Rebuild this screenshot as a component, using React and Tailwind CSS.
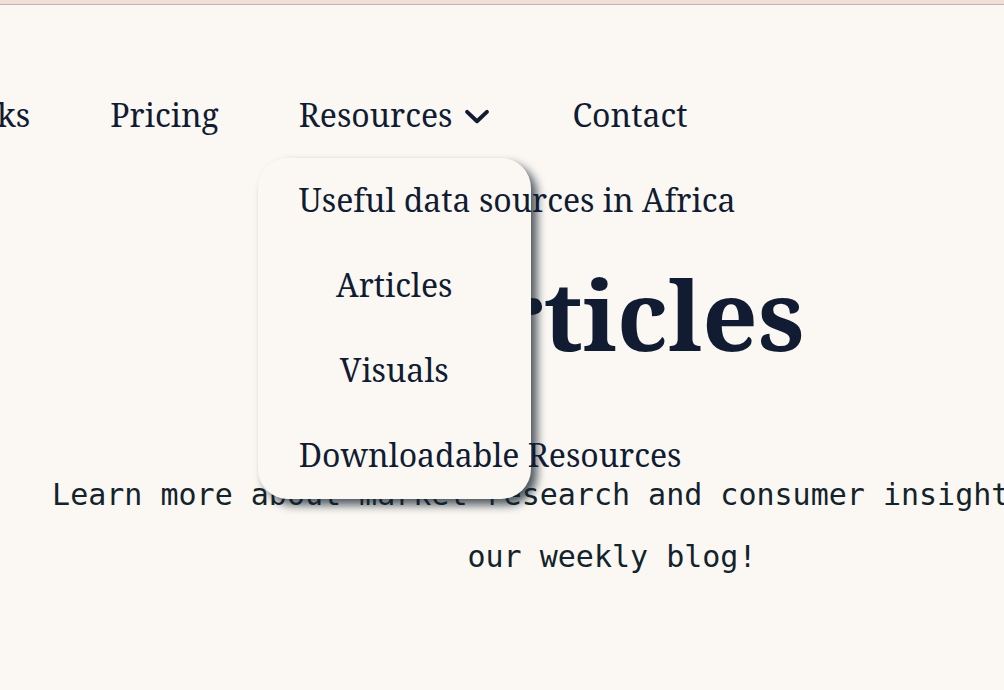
import React, { useState } from 'react';

const serif = { fontFamily: '"Noto Serif", "DejaVu Serif", serif' };

function Chevron() {
  return (
    <svg className="w-[28px] h-[28px] ml-[11px] mr-[1px] mt-[2px]" viewBox="0 0 24 24" fill="none" stroke="currentColor" strokeWidth={3.4} strokeLinecap="round" strokeLinejoin="round">
      <path d="M3.5 8.5l8.5 8 8.5-8" />
    </svg>
  );
}

export default function App() {
  const [open] = useState(true);
  const items = ['Useful data sources in Africa', 'Articles', 'Visuals', 'Downloadable Resources'];

  return (
    <div className="min-h-[690px] bg-[#fbf8f4] overflow-hidden text-[#111c33]">
      <div className="h-[4px] bg-[#f1e0d8] border-b border-[#c4b3ad] box-content" />

      <nav className="font-['Noto_Serif','DejaVu_Serif',serif] text-[32px] pt-[87px] flex items-center gap-[80px] ml-[-68px] whitespace-nowrap">
        <a className="leading-[46px]">Works</a>
        <a className="leading-[46px]">Pricing</a>
        <div className="relative flex items-center">
          <a className="leading-[46px]">Resources</a>
          <Chevron />
          {open && (
            <div className="absolute left-[-41px] top-[66px] w-[273px] rounded-[30px] bg-[#fbf8f4] shadow-[6px_6px_10px_rgba(20,35,45,0.75)] px-[41px] pt-0 pb-[1px] text-center z-10">
              {items.map((t) => (
                <a key={t} className="block h-[85px] leading-[83px]">{t}</a>
              ))}
            </div>
          )}
        </div>
        <a className="leading-[46px]">Contact</a>
      </nav>

      <main className="w-[1224px] text-center">
        <h1 className="text-[97px] font-bold leading-[1.2] mt-[117px]" style={serif}>Articles</h1>
        <p className="mx-auto w-[1130px] mt-[93px] font-['DejaVu_Sans_Mono',monospace] text-[30px] leading-[62px] text-[#13232b]">
          Learn more about market research and consumer insights through our weekly blog!
        </p>
      </main>
    </div>
  );
}
